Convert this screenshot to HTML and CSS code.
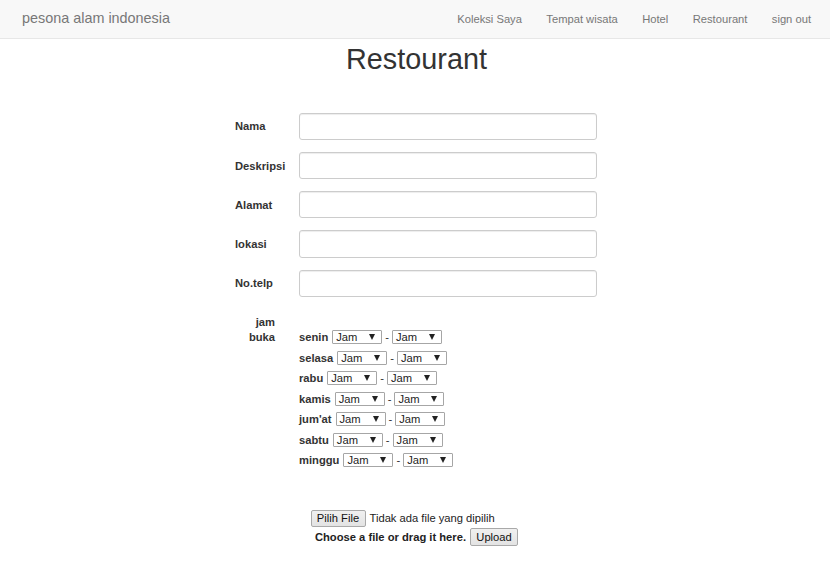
FILE: index.html
```html
<!DOCTYPE html>
<html lang="id">
<head>
<meta charset="utf-8">
<title>Restourant</title>
<link rel="stylesheet" href="styles.css">
</head>
<body>
<nav class="navbar">
  <a class="brand" href="#">pesona alam indonesia</a>
  <ul class="nav-links">
    <li><a href="#">Koleksi Saya</a></li>
    <li><a href="#">Tempat wisata</a></li>
    <li><a href="#">Hotel</a></li>
    <li><a href="#">Restourant</a></li>
    <li><a href="#">sign out</a></li>
  </ul>
</nav>

<h1 class="title">Restourant</h1>

<form class="form">
  <div class="row"><label class="lbl">Nama</label><input class="field" type="text"></div>
  <div class="row"><label class="lbl">Deskripsi</label><input class="field" type="text"></div>
  <div class="row"><label class="lbl">Alamat</label><input class="field" type="text"></div>
  <div class="row"><label class="lbl">lokasi</label><input class="field" type="text"></div>
  <div class="row"><label class="lbl">No.telp</label><input class="field" type="text"></div>

  <div class="hours">
    <div class="hours-lbl"><span>jam<br>buka</span></div>
    <div class="days">
      <div class="day"><b>senin</b><span class="sel">Jam</span>-<span class="sel">Jam</span></div>
      <div class="day"><b>selasa</b><span class="sel">Jam</span>-<span class="sel">Jam</span></div>
      <div class="day"><b>rabu</b><span class="sel">Jam</span>-<span class="sel">Jam</span></div>
      <div class="day"><b>kamis</b><span class="sel">Jam</span>-<span class="sel">Jam</span></div>
      <div class="day"><b>jum'at</b><span class="sel">Jam</span>-<span class="sel">Jam</span></div>
      <div class="day"><b>sabtu</b><span class="sel">Jam</span>-<span class="sel">Jam</span></div>
      <div class="day"><b>minggu</b><span class="sel">Jam</span>-<span class="sel">Jam</span></div>
    </div>
  </div>

  <div class="upload">
    <div class="file-line"><span class="btn btn-file">Pilih File</span><span class="file-name">Tidak ada file yang dipilih</span></div>
    <div class="drop-line"><b>Choose a file or drag it here.</b><span class="btn btn-upload">Upload</span></div>
  </div>
</form>
</body>
</html>
```

FILE: styles.css
```css
* { box-sizing: border-box; }

body {
  margin: 0;
  font-family: "Liberation Sans", Arial, sans-serif;
  font-size: 11.2px;
  line-height: 1.42857;
  color: #333;
  background: #fff;
}

.navbar {
  height: 39px;
  background: #f8f8f8;
  border-bottom: 1px solid #e7e7e7;
  display: flex;
  align-items: center;
  justify-content: space-between;
  padding: 0 7px 1px 22px;
}

.brand {
  font-size: 14.4px;
  color: #777;
  text-decoration: none;
}

.nav-links {
  list-style: none;
  margin: 0;
  padding: 0;
  display: flex;
}

.nav-links a {
  display: block;
  padding: 0 12.2px;
  color: #777;
  text-decoration: none;
}

.nav-links li:last-child a { padding-right: 12px; }

.title {
  margin: 5px 0 0;
  text-align: center;
  text-indent: 3px;
  font-size: 28.8px;
  font-weight: 500;
  line-height: 1.1;
}

.form {
  width: 362px;
  margin: 37px 0 0 calc(50% - 180px);
}

.row {
  display: flex;
  align-items: center;
  height: 27.2px;
  margin-bottom: 12.05px;
}

.lbl {
  width: 64px;
  flex: none;
  font-weight: bold;
}

.field {
  flex: 1;
  height: 27.2px;
  border: 1px solid #ccc;
  border-radius: 3px;
  box-shadow: inset 0 1px 1px rgba(0,0,0,.075);
  font: inherit;
  padding: 0 9px;
}

.hours {
  display: flex;
  margin-top: 18px;
}

.hours-lbl {
  width: 64px;
  flex: none;
  font-weight: bold;
  line-height: 15px;
}

.hours-lbl span {
  display: block;
  width: 40px;
  text-align: right;
}

.days {
  padding-top: 12px;
}

.day {
  display: flex;
  align-items: center;
  height: 20.5px;
  gap: 3px;
}

.day b { margin-right: 1px; }

.sel {
  position: relative;
  display: inline-block;
  width: 50px;
  height: 14px;
  border: 1px solid #a6a6a6;
  border-radius: 1px;
  background: #fff;
  color: #222;
  line-height: 12px;
  padding-left: 3px;
}

.sel::after {
  content: "";
  position: absolute;
  right: 6px;
  top: 3px;
  border-left: 3.5px solid transparent;
  border-right: 3.5px solid transparent;
  border-top: 6px solid #222;
}

.upload {
  margin-top: 39px;
  text-align: center;
  color: #222;
}

.file-line {
  display: flex;
  justify-content: center;
  align-items: center;
  height: 18px;
}

.file-name {
  width: 152px;
  text-align: left;
  margin-left: 4px;
}

.drop-line {
  display: flex;
  justify-content: center;
  align-items: center;
  height: 19px;
  gap: 4px;
  padding-left: 1px;
}

.drop-line b { color: #222; }

.btn {
  display: inline-block;
  height: 18px;
  line-height: 16px;
  padding: 0 5px;
  border: 1px solid #a9a9a9;
  border-radius: 2px;
  background: linear-gradient(#f0f0f0, #e3e3e3);
  color: #111;
}

.btn-file { width: 55px; height: 17px; line-height: 15px; }
.btn-upload { width: 48px; }
```
